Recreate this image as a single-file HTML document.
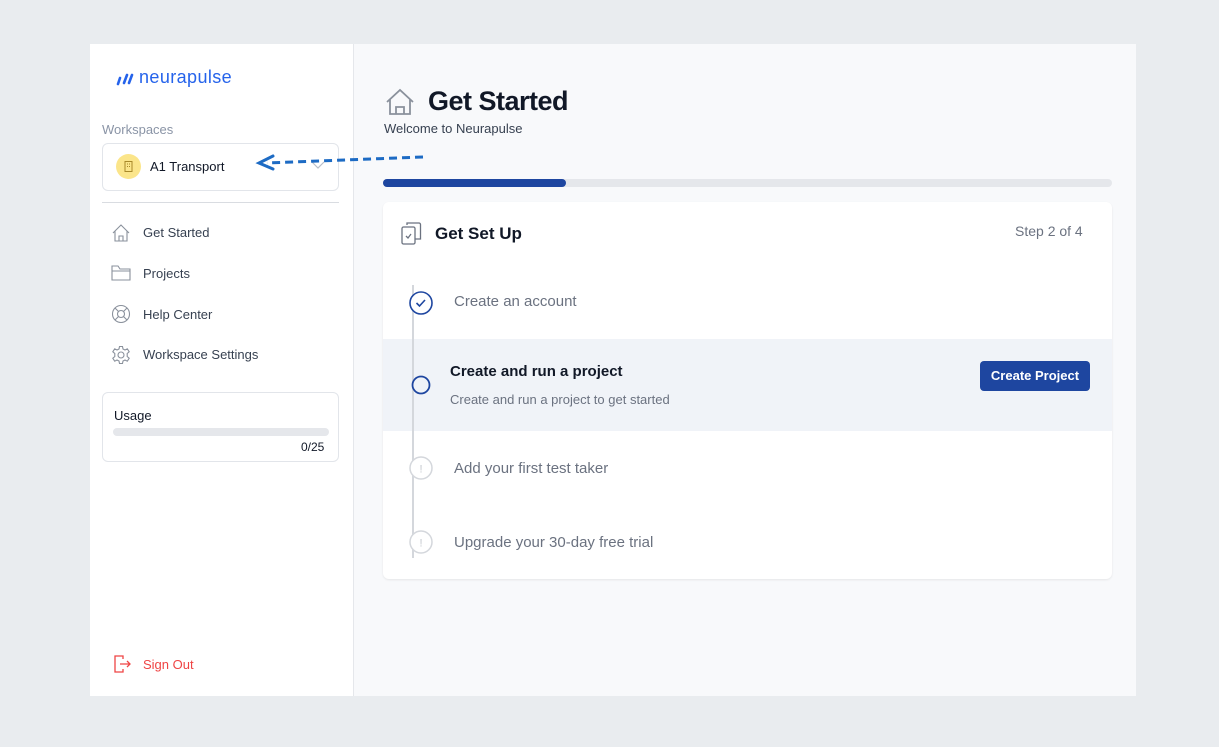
<!DOCTYPE html>
<html><head><style>
*{margin:0;padding:0;box-sizing:border-box}
body{width:1219px;height:747px;background:#e9ecef;font-family:"Liberation Sans",sans-serif;position:relative;overflow:hidden}
.a{position:absolute}
.frame{left:90px;top:44px;width:1046px;height:652px;background:#f8f9fb}
.side{left:90px;top:44px;width:264px;height:652px;background:#fff;border-right:1px solid #e5e7eb}
.nav{font-size:13px;color:#374151}
svg{position:absolute}
</style></head><body>
<div class="a frame"></div>
<div class="a side"></div>
<!-- logo -->
<svg style="left:116px;top:72px" width="20" height="14" viewBox="0 0 20 14"><g stroke="#2563eb" stroke-width="2.6" stroke-linecap="round"><line x1="2" y1="12" x2="4" y2="6"/><line x1="8" y1="11" x2="11" y2="3"/><line x1="13" y1="11" x2="16" y2="3"/></g></svg>
<div class="a" style="left:139px;top:67px;font-size:18px;color:#2563eb;letter-spacing:0.4px">neurapulse</div>
<div class="a" style="left:102px;top:122px;font-size:13px;color:#8a94a6">Workspaces</div>
<div class="a" style="left:102px;top:143px;width:237px;height:48px;border:1px solid #e2e5ea;border-radius:6px;background:#fff"></div>
<div class="a" style="left:116px;top:154px;width:25px;height:25px;border-radius:50%;background:#fbe58a"></div>
<svg style="left:122px;top:160px" width="13" height="13" viewBox="0 0 13 13"><rect x="3" y="1.5" width="7" height="10" fill="none" stroke="#a8892a" stroke-width="1"/><g fill="#a8892a"><rect x="5" y="3.5" width="1" height="1"/><rect x="7" y="3.5" width="1" height="1"/><rect x="5" y="6" width="1" height="1"/><rect x="7" y="6" width="1" height="1"/></g></svg>
<div class="a" style="left:150px;top:159px;font-size:13px;color:#111827">A1 Transport</div>
<svg style="left:310px;top:160px" width="16" height="10"><polyline points="2,2 8,8 14,2" fill="none" stroke="#b8bec8" stroke-width="1.2"/></svg>
<!-- dashed arrow -->
<svg style="left:255px;top:150px" width="170" height="24"><line x1="168" y1="7" x2="12" y2="13" stroke="#1d6bc4" stroke-width="3" stroke-dasharray="8,5"/><path d="M18 6 L4 13 L18 19" fill="none" stroke="#1d6bc4" stroke-width="3" stroke-linecap="round"/></svg>
<div class="a" style="left:102px;top:202px;width:237px;height:1px;background:#d9dce1"></div>
<!-- nav icons -->
<svg style="left:111px;top:223px" width="20" height="20" viewBox="0 0 20 20" fill="none" stroke="#8a919c" stroke-width="1.1"><path d="M2 10 L10 2 L18 10 M4 8 V18 H16 V8 M8 18 V13 H12 V18"/></svg>
<div class="a nav" style="left:143px;top:225px">Get Started</div>
<svg style="left:111px;top:264px" width="20" height="18" viewBox="0 0 20 18" fill="none" stroke="#8a919c" stroke-width="1.1"><path d="M1 3 V16 H19 V5 H9 L7 2 H1 Z M1 7 H19"/></svg>
<div class="a nav" style="left:143px;top:266px">Projects</div>
<svg style="left:111px;top:304px" width="20" height="20" viewBox="0 0 20 20" fill="none" stroke="#8a919c" stroke-width="1.1"><circle cx="10" cy="10" r="8.5"/><circle cx="10" cy="10" r="3.5"/><path d="M4 4 L7.5 7.5 M16 4 L12.5 7.5 M4 16 L7.5 12.5 M16 16 L12.5 12.5"/></svg>
<div class="a nav" style="left:143px;top:307px">Help Center</div>
<svg style="left:111px;top:345px" width="20" height="20" viewBox="0 0 20 20" fill="none" stroke="#8a919c" stroke-width="1.1"><path d="M8.5 1.5 H11.5 L12 4 L14 5 L16.3 3.8 L18.2 6.8 L16.2 8.5 V11.5 L18.2 13.2 L16.3 16.2 L14 15 L12 16 L11.5 18.5 H8.5 L8 16 L6 15 L3.7 16.2 L1.8 13.2 L3.8 11.5 V8.5 L1.8 6.8 L3.7 3.8 L6 5 L8 4 Z"/><circle cx="10" cy="10" r="3"/></svg>
<div class="a nav" style="left:143px;top:347px">Workspace Settings</div>
<!-- usage -->
<div class="a" style="left:102px;top:392px;width:237px;height:70px;border:1px solid #e2e5ea;border-radius:6px;background:#fff"></div>
<div class="a" style="left:114px;top:408px;font-size:13px;color:#111827">Usage</div>
<div class="a" style="left:113px;top:428px;width:216px;height:8px;border-radius:4px;background:#e5e7eb"></div>
<div class="a" style="left:301px;top:440px;font-size:12px;color:#111827">0/25</div>
<!-- sign out -->
<svg style="left:112px;top:654px" width="20" height="20" viewBox="0 0 20 20" fill="none" stroke="#ef4444" stroke-width="1.3"><path d="M11 5 V2 H3 V18 H11 V15 M8 10 H18 M15 7 L18 10 L15 13"/></svg>
<div class="a" style="left:143px;top:657px;font-size:13px;color:#ef4444">Sign Out</div>
<!-- main header -->
<svg style="left:385px;top:88px" width="30" height="28" viewBox="0 0 30 28" fill="none" stroke="#8a919c" stroke-width="1.8"><path d="M2 14 L15 2 L28 14 M5 11 V26 H25 V11 M11 26 V19 H19 V26"/></svg>
<div class="a" style="left:428px;top:86px;font-size:27px;font-weight:bold;color:#111827;letter-spacing:-0.5px">Get Started</div>
<div class="a" style="left:384px;top:121px;font-size:13px;color:#374151">Welcome to Neurapulse</div>
<div class="a" style="left:383px;top:179px;width:729px;height:8px;border-radius:4px;background:#e5e7eb"></div>
<div class="a" style="left:383px;top:179px;width:183px;height:8px;border-radius:4px;background:#1e46a0"></div>
<!-- card -->
<div class="a" style="left:383px;top:202px;width:729px;height:377px;background:#fff;border-radius:6px;box-shadow:0 1px 2px rgba(0,0,0,.08);overflow:hidden">
 <div class="a" style="left:0;top:137px;width:729px;height:92px;background:#f0f3f8"></div>
</div>
<svg style="left:400px;top:221px" width="24" height="24" viewBox="0 0 24 24" fill="none" stroke="#6b7280" stroke-width="1.3"><rect x="2" y="6" width="13" height="17" rx="1.5"/><path d="M7 4 V2 H19 a1.5 1.5 0 0 1 1.5 1.5 V18 H15"/><path d="M6 15 L8 17 L11 13"/></svg>
<div class="a" style="left:435px;top:224px;font-size:17px;font-weight:bold;color:#111827">Get Set Up</div>
<div class="a" style="left:1015px;top:223px;font-size:14px;color:#6b7280">Step 2 of 4</div>
<div class="a" style="left:412px;top:285px;width:2px;height:273px;background:#d4d7dc"></div>
<svg style="left:408px;top:290px" width="26" height="26"><circle cx="13" cy="13" r="11" fill="#fff" stroke="#1e46a0" stroke-width="1.6"/><polyline points="8.5,13 11.5,16 17,10" fill="none" stroke="#1e46a0" stroke-width="1.6"/></svg>
<div class="a" style="left:454px;top:293px;font-size:15px;color:#6b7280">Create an account</div>
<svg style="left:408px;top:372px" width="26" height="26"><circle cx="13" cy="13" r="8.5" fill="#f0f3f8" stroke="#1e46a0" stroke-width="1.8"/></svg>
<div class="a" style="left:450px;top:363px;font-size:15px;font-weight:bold;color:#111827">Create and run a project</div>
<div class="a" style="left:450px;top:392px;font-size:13px;color:#6b7280">Create and run a project to get started</div>
<div class="a" style="left:980px;top:361px;width:110px;height:30px;border-radius:4px;background:#1e46a0;color:#fff;font-size:13px;font-weight:bold;text-align:center;line-height:30px">Create Project</div>
<svg style="left:408px;top:455px" width="26" height="26"><circle cx="13" cy="13" r="11" fill="#fff" stroke="#d4d7dc" stroke-width="1.5"/><text x="13" y="17.5" font-size="11" fill="#c4c8ce" text-anchor="middle" font-family="Liberation Sans">!</text></svg>
<div class="a" style="left:454px;top:460px;font-size:15px;color:#6b7280">Add your first test taker</div>
<svg style="left:408px;top:529px" width="26" height="26"><circle cx="13" cy="13" r="11" fill="#fff" stroke="#d4d7dc" stroke-width="1.5"/><text x="13" y="17.5" font-size="11" fill="#c4c8ce" text-anchor="middle" font-family="Liberation Sans">!</text></svg>
<div class="a" style="left:454px;top:534px;font-size:15px;color:#6b7280">Upgrade your 30-day free trial</div>
</body></html>
